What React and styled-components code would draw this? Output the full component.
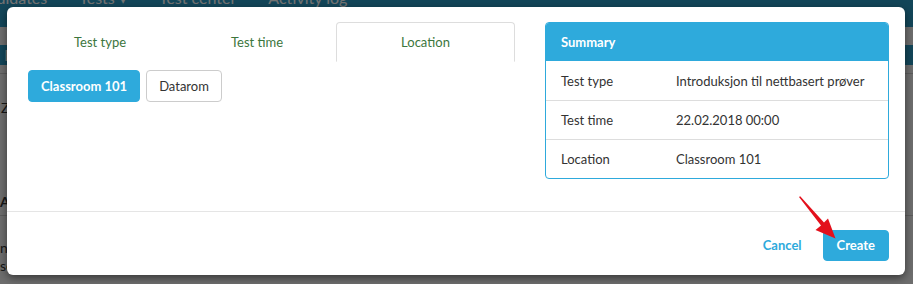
import React from "react";
import styled, { createGlobalStyle } from "styled-components";

const Global = createGlobalStyle`
  html, body { margin: 0; padding: 0; }
  body {
    width: 913px; height: 284px; overflow: hidden;
    background: #f4f4f4;
    font-family: Lato, "Open Sans", "Liberation Sans", sans-serif;
  }
`;

const Page = styled.div`
  position: relative;
  width: 913px;
  height: 284px;
  overflow: hidden;
`;

const NavBar = styled.div`
  height: 27px;
  background: #2b9cc6;
  display: flex;
  align-items: flex-end;
  gap: 32px;
  margin-left: -31px;
`;

const NavItem = styled.span`
  font-size: 16px;
  color: #fff;
  line-height: 1;
  transform: translateY(-21px);
  white-space: nowrap;
`;

const SubBar = styled.div`
  margin-top: 18px;
  height: 20px;
  background: #2b9cc6;
  color: #fff;
  font-size: 16px;
  padding-left: 4px;
`;

const PageLine = styled.div`
  margin-top: ${(p) => p.$mt}px;
  border-top: 1px solid #ccc;
`;

const PageText = styled.div`
  margin-top: ${(p) => p.$mt}px;
  font-size: 14px;
  line-height: 16px;
  color: #333;
  padding-left: ${(p) => p.$pl || 0}px;
  font-weight: ${(p) => (p.$bold ? 700 : 400)};
`;

const Backdrop = styled.div`
  position: absolute;
  inset: 0;
  background: rgba(0, 0, 0, 0.55);
`;

const Modal = styled.div`
  position: absolute;
  left: 7px;
  top: 7px;
  width: 898px;
  height: 268px;
  background: #fff;
  border-radius: 6px;
  box-shadow: 0 3px 9px rgba(0, 0, 0, 0.5);
  display: flex;
  flex-direction: column;
`;

const Body = styled.div`
  height: 205px;
  box-sizing: border-box;
  padding: 15px 16px 0 15px;
  display: flex;
  gap: 30px;
  border-bottom: 1px solid #e5e5e5;
`;

const LeftCol = styled.div`
  width: 493px;
`;

const Tabs = styled.div`
  display: flex;
  border-bottom: 1px solid #ddd;
  height: 39px;
`;

const Tab = styled.div`
  width: ${(p) => p.$w}px;
  box-sizing: border-box;
  display: flex;
  align-items: center;
  justify-content: center;
  font-size: 13px;
  color: #3c763d;
  border: 1px solid ${(p) => (p.$active ? "#ddd" : "transparent")};
  border-bottom-color: ${(p) => (p.$active ? "#fff" : "transparent")};
  border-radius: 4px 4px 0 0;
  margin-bottom: -1px;
  background: #fff;
`;

const Choices = styled.div`
  display: flex;
  gap: 6px;
  padding: 8px 0 0 6px;
`;

const Choice = styled.button`
  height: 32px;
  box-sizing: border-box;
  padding: 0 12px;
  border-radius: 4px;
  font-family: inherit;
  font-size: 13px;
  border: 1px solid ${(p) => (p.$active ? "#2eaadc" : "#ccc")};
  background: ${(p) => (p.$active ? "#2eaadc" : "#fff")};
  color: ${(p) => (p.$active ? "#fff" : "#333")};
  font-weight: ${(p) => (p.$active ? 700 : 400)};
`;

const Summary = styled.div`
  width: 344px;
  height: 157px;
  box-sizing: border-box;
  border: 1px solid #2eaadc;
  border-radius: 4px;
  overflow: hidden;
`;

const SummaryHead = styled.div`
  height: 38px;
  background: #2eaadc;
  color: #fff;
  font-weight: 700;
  font-size: 13px;
  display: flex;
  align-items: center;
  padding-left: 15px;
`;

const Row = styled.div`
  height: 39px;
  box-sizing: border-box;
  display: grid;
  grid-template-columns: 115px 1fr;
  align-items: center;
  padding-left: 15px;
  font-size: 13px;
  color: #333;
  border-top: ${(p) => (p.$first ? "none" : "1px solid #ddd")};
`;

const Footer = styled.div`
  flex: 1;
  display: flex;
  justify-content: flex-end;
  align-items: center;
  gap: 21px;
  padding: 3px 16px 0 0;
`;

const LinkButton = styled.span`
  color: #2eaadc;
  font-size: 13px;
  font-weight: 700;
`;

const PrimaryButton = styled.button`
  height: 31px;
  padding: 0 13px;
  border: 1px solid #2eaadc;
  background: #2eaadc;
  color: #fff;
  font-family: inherit;
  font-weight: 700;
  font-size: 13px;
  border-radius: 4px;
`;

const Arrow = styled.svg`
  position: absolute;
  left: 795px;
  top: 194px;
`;

const rows = [
  ["Test type", "Introduksjon til nettbasert prøver"],
  ["Test time", "22.02.2018 00:00"],
  ["Location", "Classroom 101"],
];

export default function App() {
  return (
    <Page>
      <Global />
      <NavBar>
        <NavItem>Candidates</NavItem>
        <NavItem>Tests ▾</NavItem>
        <NavItem>Test center</NavItem>
        <NavItem>Activity log</NavItem>
      </NavBar>
      <SubBar>F</SubBar>
      <PageLine $mt={8} />
      <PageText $mt={26} $pl={1}>Z</PageText>
      <PageText $mt={78} $bold>Articles</PageText>
      <PageLine $mt={5} />
      <PageText $mt={24}>n</PageText>
      <PageText $mt={2}>se</PageText>
      <Backdrop />
      <Modal>
        <Body>
          <LeftCol>
            <Tabs>
              <Tab $w={156}>Test type</Tab>
              <Tab $w={158}>Test time</Tab>
              <Tab $w={179} $active>Location</Tab>
            </Tabs>
            <Choices>
              <Choice $active>Classroom 101</Choice>
              <Choice>Datarom</Choice>
            </Choices>
          </LeftCol>
          <Summary>
            <SummaryHead>Summary</SummaryHead>
            {rows.map(([k, v], i) => (
              <Row key={k} $first={i === 0}>
                <span>{k}</span>
                <span>{v}</span>
              </Row>
            ))}
          </Summary>
        </Body>
        <Footer>
          <LinkButton>Cancel</LinkButton>
          <PrimaryButton>Create</PrimaryButton>
        </Footer>
      </Modal>
      <Arrow width="50" height="50" viewBox="0 0 50 50">
        <path d="M4 3 L5.2 2.2 L29 28.5 L33 24.5 L40.5 44.5 L20.5 36 L26 31.5 Z" fill="#e3101c" />
      </Arrow>
    </Page>
  );
}
